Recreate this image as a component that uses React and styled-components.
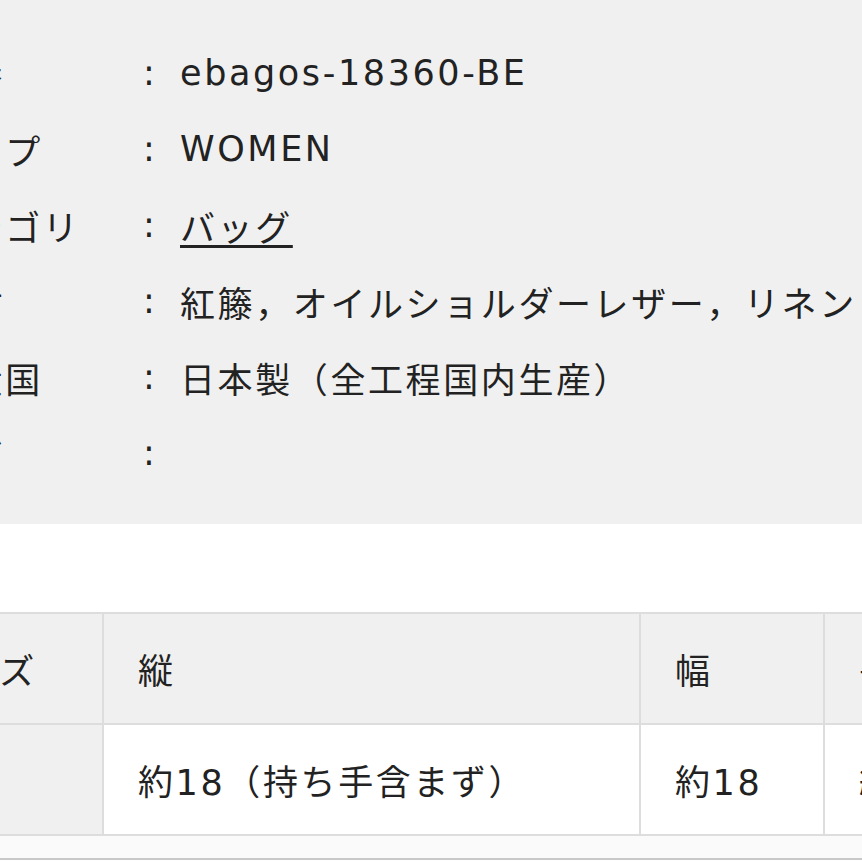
import React from "react";
import styled, { createGlobalStyle } from "styled-components";

const GlobalStyle = createGlobalStyle`
  html, body {
    margin: 0;
    padding: 0;
    background: #ffffff;
    overflow: hidden;
  }
  body {
    font-family: "DejaVu Sans", "Noto Sans CJK JP", sans-serif;
    color: #222222;
  }
`;

const Page = styled.div`
  width: 1100px;
  margin-left: -70px;
`;

const SpecPanel = styled.div`
  background: #f0f0f0;
  padding: 35px 0 33px;
`;

const SpecRow = styled.div`
  display: grid;
  grid-template-columns: 213px 37px 1fr;
  align-items: center;
  height: 76px;
  font-size: 35px;
  letter-spacing: 2.6px;
  white-space: nowrap;
`;

const Label = styled.div``;

const Colon = styled.div``;

const Value = styled.div``;

const ValueLink = styled.a`
  color: #222222;
  text-decoration: underline;
  text-decoration-thickness: 3px;
  text-underline-offset: 4px;
`;

const Spacer = styled.div`
  height: 88px;
`;

const SizeTable = styled.table`
  border-collapse: collapse;
  table-layout: fixed;
  width: 1140px;
  margin-left: -41px;
  font-size: 35px;
  letter-spacing: 2.6px;
  white-space: nowrap;
`;

const Cell = styled.td`
  border: 2px solid #dddddd;
  height: 109px;
  padding: 0 0 0 34px;
  background: ${(p) => (p.$head ? "#f0f0f0" : "#ffffff")};
  vertical-align: middle;
`;

const FillerCell = styled.td`
  border-top: 2px solid #dddddd;
  border-bottom: 2px solid #c8c8c8;
  height: 22px;
  background: #fafafa;
  padding: 0;
`;

const specs = [
  { label: "品番", value: "ebagos-18360-BE" },
  { label: "タイプ", value: "WOMEN" },
  { label: "カテゴリ", value: "バッグ", link: true },
  { label: "素材", value: "紅籐，オイルショルダーレザー，リネン" },
  { label: "生産国", value: "日本製（全工程国内生産）" },
  { label: "タグ", value: "" },
];

export default function App() {
  return (
    <Page>
      <GlobalStyle />
      <SpecPanel>
        {specs.map((s) => (
          <SpecRow key={s.label}>
            <Label>{s.label}</Label>
            <Colon>:</Colon>
            <Value>
              {s.link ? <ValueLink href="#">{s.value}</ValueLink> : s.value}
            </Value>
          </SpecRow>
        ))}
      </SpecPanel>
      <Spacer />
      <SizeTable>
        <colgroup>
          <col style={{ width: "213px" }} />
          <col style={{ width: "537px" }} />
          <col style={{ width: "184px" }} />
          <col style={{ width: "206px" }} />
        </colgroup>
        <tbody>
          <tr>
            <Cell $head>サイズ</Cell>
            <Cell $head>縦</Cell>
            <Cell $head>幅</Cell>
            <Cell $head>長さ</Cell>
          </tr>
          <tr>
            <Cell $head />
            <Cell>約18（持ち手含まず）</Cell>
            <Cell>約18</Cell>
            <Cell>約8</Cell>
          </tr>
          <tr>
            <FillerCell />
            <FillerCell />
            <FillerCell />
            <FillerCell />
          </tr>
        </tbody>
      </SizeTable>
    </Page>
  );
}
